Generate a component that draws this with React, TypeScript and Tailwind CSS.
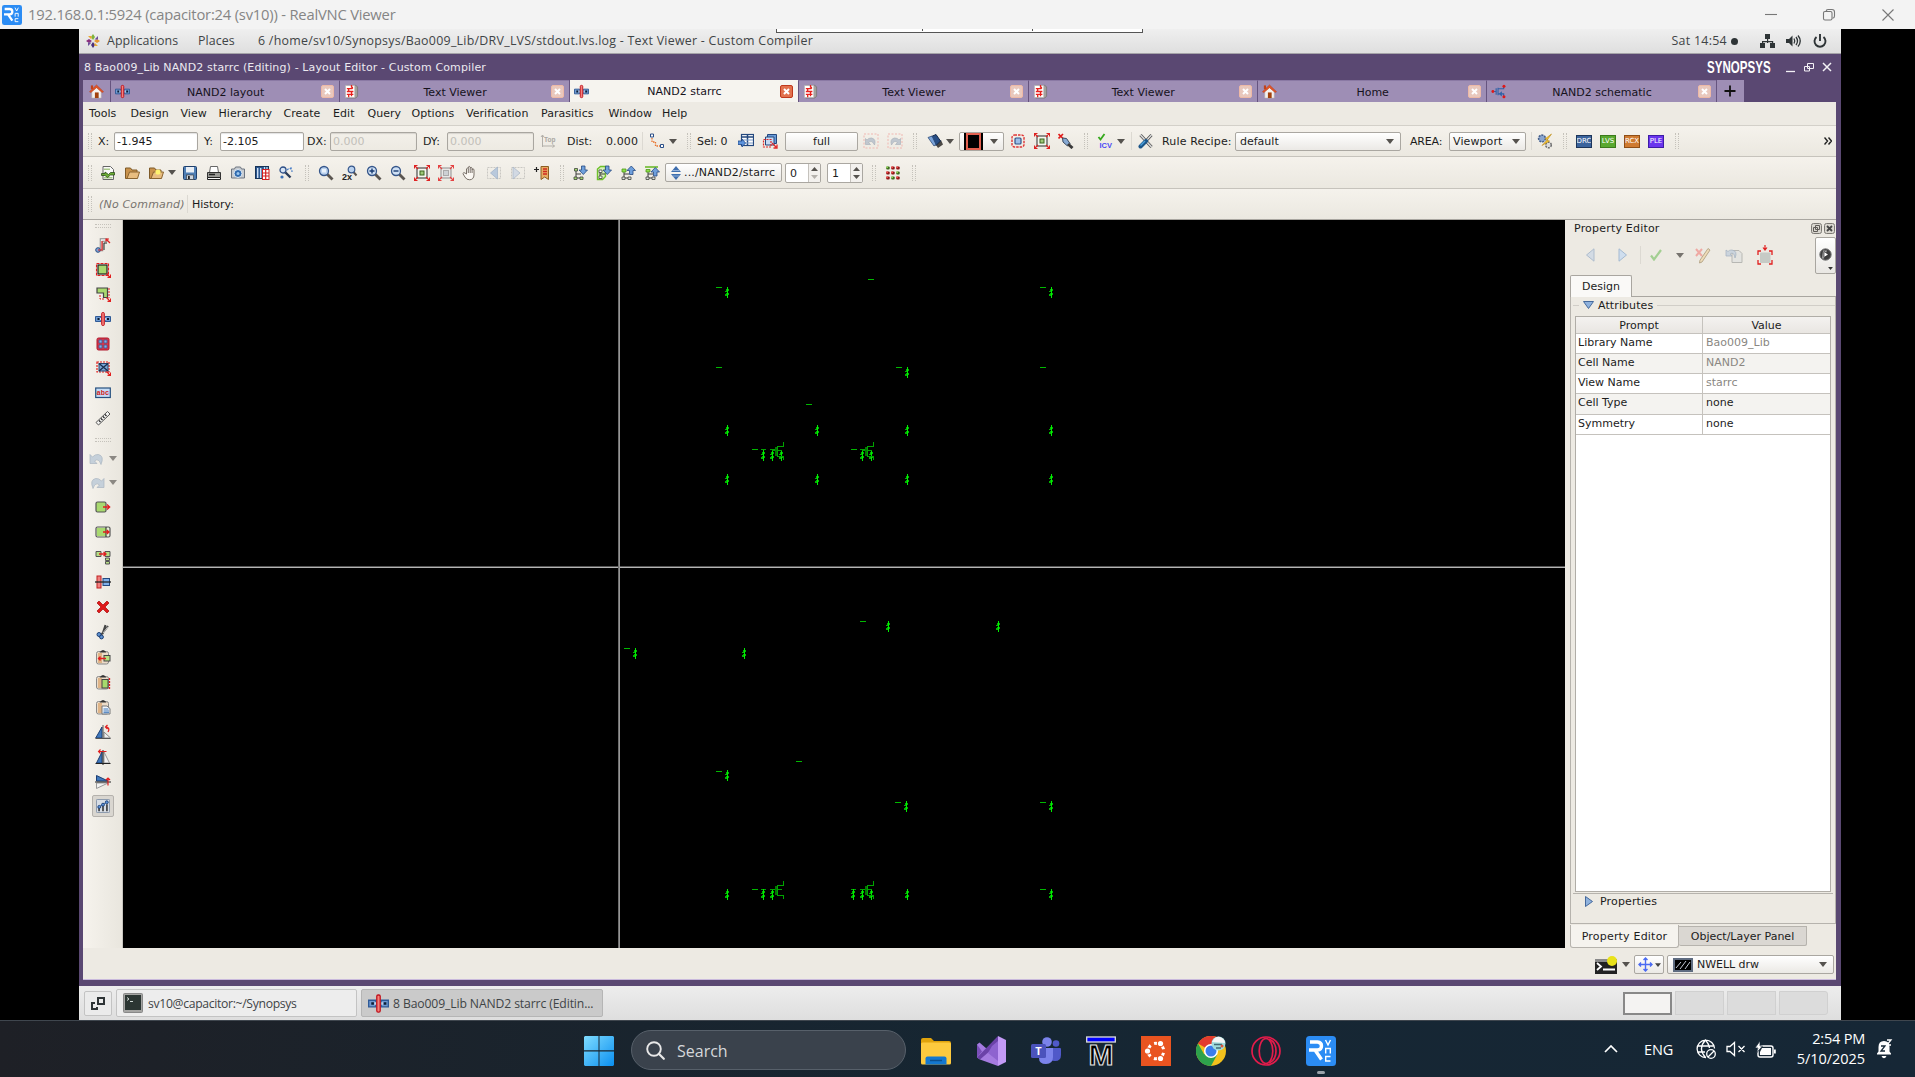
import React from "react";

const P: Record<string, React.ReactNode> = {
  device: (
    <>
      <path d="M0.500 5.500h5.500v5H0.500zM10 5.500h5.500v5H10z" fill="#6f9ad0" stroke="#2f5a97" />
      <path d="M2.500 7h2v2h-2zM12 7h2v2h-2z" fill="#0d1c33" />
      <path d="M5 7h1v2H5zM10.200 7h1v2h-1z" fill="#dbe8f7" />
      <rect x="6.700" y="1.500" width="2.600" height="13" rx="1" fill="#f4827c" stroke="#c1121c" />
    </>
  ),
  home: (
    <>
      <path d="M3 8l5-5 5 5v7H3z" fill="#f4f2f0" stroke="#b9b1ad" strokeWidth=".6" />
      <path d="M0.500 8.200L8 1l7.500 7.200-1.500.9L8 4 2 9.100z" fill="#e0562a" stroke="#b8380f" strokeWidth=".5" />
      <rect x="2" y="1.500" width="2.300" height="4" fill="#c3421b" />
      <rect x="6.300" y="9" width="4" height="6" fill="#a2410d" />
    </>
  ),
  textdoc: (
    <>
      <path d="M3 1.500h9.500l2 1.500v10l-2 2H3z" fill="#a3a09b" stroke="#6f6c68" strokeWidth=".7" />
      <path d="M1.500 1.500h10v13h-10z" fill="#fff" stroke="#aaa" strokeWidth=".7" />
      <path d="M8 1v3M3 5h6M3 8h7M5 5v3M3 11h7M8 8v5M5 11v3M9 3v2" stroke="#e8201c" strokeWidth="1.400" fill="none" />
    </>
  ),
  schematic: (
    <>
      <path d="M2 8h3M5.500 4.500v7M7.500 4v8M7.500 5h6V2.500M7.500 10.500h6V13M9 10.500l2-1.500v3z" stroke="#2f62a8" strokeWidth="1.200" fill="none" />
      <circle cx="2" cy="8" r="1.500" fill="#e01818" />
      <circle cx="13.800" cy="2.300" r="1.600" fill="#e01818" />
      <circle cx="13.800" cy="13.500" r="1.600" fill="#e01818" />
    </>
  ),
  newdoc: (
    <>
      <path d="M3 1.500h7.500L13.500 4.500v10H3z" fill="#fafafa" stroke="#666" />
      <path d="M4 3.500h6v1.500H4zM4 12h8.500v1.500H4z" fill="#a9c98a" />
      <path d="M1.500 8.500h3.500V7l3.500 2.500 2-2h4V10h-4l-3 2.500L5 10.500H1.500z" fill="#6cae35" stroke="#2b4d18" strokeWidth=".8" />
    </>
  ),
  folder: (
    <>
      <path d="M1.500 3h5l1.500 2h5v8.500h-11.500z" fill="#c9924c" stroke="#7e5a28" />
      <path d="M3 13.500L5.500 7h10l-2 6.500z" fill="#e8bd80" stroke="#8a6430" />
    </>
  ),
  folderstar: (
    <>
      <path d="M1.500 3h5l1.500 2h5v8.500h-11.500z" fill="#c9924c" stroke="#7e5a28" />
      <path d="M3 13.500L5.500 7h10l-2 6.500z" fill="#e8bd80" stroke="#8a6430" />
      <circle cx="10" cy="7" r="2.600" fill="#fff36e" />
    </>
  ),
  save: (
    <>
      <rect x="1.500" y="1.500" width="13" height="13" rx="1" fill="#4f7fb5" stroke="#1f3f6b" />
      <rect x="4" y="2" width="8" height="5.500" fill="#e8eef5" />
      <rect x="4.500" y="10" width="7" height="4.500" fill="#cdd5de" stroke="#333" strokeWidth=".6" />
      <rect x="6" y="11" width="1.800" height="3" fill="#222" />
    </>
  ),
  print: (
    <>
      <path d="M4.500 1.500h7l1 6h-9z" fill="#fff" stroke="#666" />
      <path d="M1.500 7.500h13v5h-13z" fill="#9a9a96" stroke="#333" />
      <path d="M1.500 12.500h13v2h-13z" fill="#f7f7f7" stroke="#222" />
      <path d="M3 9.500h6" stroke="#222" strokeWidth="1.500" />
    </>
  ),
  camera: (
    <>
      <path d="M1.500 4h3l1-2h5l1 2h3v9h-13z" fill="#c8ccd0" stroke="#6c7480" />
      <circle cx="8" cy="8.500" r="4" fill="#2f6aae" stroke="#dfe9f4" />
      <circle cx="8" cy="8.500" r="1.500" fill="#9cc6ee" />
    </>
  ),
  library: (
    <>
      <rect x="1.500" y="1.500" width="13" height="12" fill="#2a568f" stroke="#183457" />
      <path d="M3.700 3v10M6.700 3v10" stroke="#cfe0f4" strokeWidth="1.400" />
      <path d="M10.500 2v3M13 2v3" stroke="#cfe0f4" strokeWidth="1.200" />
      <rect x="8.500" y="4.500" width="6.500" height="10" fill="#fff" stroke="#d21f1f" strokeWidth="1" />
      <path d="M11.700 4.500v10M8.500 8h6.500M8.500 11h6.500" stroke="#d21f1f" strokeWidth="1.200" />
    </>
  ),
  findtool: (
    <>
      <circle cx="5" cy="5" r="3" fill="#d7e4f4" stroke="#2e4f86" strokeWidth="1.300" />
      <path d="M7.500 7.500l5 5" stroke="#2b3c58" strokeWidth="2.400" />
      <path d="M9 5c3-3 5-1 5 2M12 3l3 0" stroke="#4b7fc7" fill="none" strokeWidth="1.200" strokeDasharray="2 1" />
      <circle cx="4" cy="12" r="1.600" fill="#3a6fb5" />
    </>
  ),
  zoom: (
    <>
      <path d="M9 9l5.500 5.500" stroke="#5a5550" strokeWidth="2.800" />
      <circle cx="6" cy="6" r="4.500" fill="#b9d1ee" stroke="#35568a" strokeWidth="1.300" />
      <rect x="4" y="4" width="4" height="3.500" fill="#e9f2fc" />
    </>
  ),
  zoom2: (
    <>
      <path d="M11.500 7l3 3.500" stroke="#5a5550" strokeWidth="2" />
      <circle cx="9.500" cy="4.500" r="3.300" fill="#b9d1ee" stroke="#35568a" strokeWidth="1.200" />
      <text x="0" y="15" fontSize="9" fontWeight="bold" fontFamily="Liberation Sans, sans-serif" fill="#222">2x</text>
    </>
  ),
  zoomin: (
    <>
      <path d="M9 9l5.500 5.500" stroke="#5a5550" strokeWidth="2.800" />
      <circle cx="6" cy="6" r="4.500" fill="#cfe0f4" stroke="#35568a" strokeWidth="1.300" />
      <path d="M6 3.500v5M3.500 6h5" stroke="#173a70" strokeWidth="1.400" />
    </>
  ),
  zoomout: (
    <>
      <path d="M9 9l5.500 5.500" stroke="#5a5550" strokeWidth="2.800" />
      <circle cx="6" cy="6" r="4.500" fill="#cfe0f4" stroke="#35568a" strokeWidth="1.300" />
      <path d="M3.500 6h5" stroke="#173a70" strokeWidth="1.400" />
    </>
  ),
  fit: (
    <>
      <rect x="3" y="3" width="10" height="10" fill="#f4f7ef" stroke="#4b4b4b" strokeWidth="1.200" />
      <rect x="6" y="6" width="4" height="4" fill="#9dc878" stroke="#3c6420" />
      <path d="M1 1l3 3M15 1l-3 3M1 15l3-3M15 15l-3-3M.5 3.500V.5h3M12.500.5h3v3M.5 12.500v3h3M12.500 15.500h3v-3" stroke="#e02222" fill="none" strokeWidth="1.100" />
    </>
  ),
  fitsel: (
    <>
      <rect x="3" y="3" width="10" height="10" fill="#e9e8e6" stroke="#8f8f8f" />
      <rect x="5.500" y="5.500" width="5" height="5" fill="#cdd1d4" stroke="#aaa" />
      <path d="M1 1l3 3M15 1l-3 3M1 15l3-3M15 15l-3-3M.5 3.500V.5h3M12.500.5h3v3M.5 12.500v3h3M12.500 15.500h3v-3" stroke="#e54343" fill="none" strokeWidth="1.100" />
    </>
  ),
  hand: (
    <path d="M4.500 9V3.800q.9-1.300 1.800 0V2q1-1.300 1.900 0v1q1-1.200 1.900 0v1.500q1-1.100 1.900 0V10q-.3 4.500-4.200 4.800Q4.500 15 2.900 12L.9 8.500q.9-1.600 2.200-.4zM6.300 4v4M8.200 3v5M10.100 4v4" fill="#fbf8f3" stroke="#6b625a" strokeWidth=".9" />
  ),
  prev: (
    <>
      <rect x="1.500" y="2.500" width="13" height="11" fill="none" stroke="#c9c7c2" strokeDasharray="2 1" />
      <path d="M11.500 2v12L4.500 8z" fill="#b9c9dc" stroke="#9fb0c5" strokeWidth=".7" />
    </>
  ),
  next: (
    <>
      <rect x="1.500" y="2.500" width="13" height="11" fill="none" stroke="#c9c7c2" strokeDasharray="2 1" />
      <path d="M3 2v12l7-6z" fill="#d2d9e3" stroke="#a7b4c6" strokeWidth=".7" />
    </>
  ),
  bookmark: (
    <>
      <path d="M0 4.500h5M2.500 2v5" stroke="#222" strokeWidth="1.200" />
      <path d="M7 1.500h7.500v13L10.700 12 7 14.500z" fill="#e7ac63" stroke="#8c5f24" />
      <path d="M9 4h4M9 6.500h4M9 9h4" stroke="#cf2a20" strokeWidth="1.400" />
    </>
  ),
  treedown: (
    <>
      <path d="M4 5v8M4 9h5M4 13h5" stroke="#3e3e3e" fill="none" />
      <path d="M2.500 3.500h3v2.500H2.500zM2 12h3v2.500H2zM8 12h3v2.500H8z" fill="#a5d86f" stroke="#3f453c" strokeWidth=".8" />
      <path d="M9.500 1h3.500v4h2.500L11.300 9.500 7 5h2.500z" fill="#6fa0dc" stroke="#274a80" strokeWidth=".8" />
    </>
  ),
  treedown2: (
    <>
      <path d="M1.500 4l3-2.500h5v10l-3 3H1.500z" fill="#d8f2bb" stroke="#6fc02b" strokeWidth="1.400" />
      <path d="M4 5v8M4 9h5" stroke="#3e3e3e" fill="none" />
      <path d="M3 5h3v2.500H3zM3 11h3v2.500H3z" fill="#fff" stroke="#3f453c" strokeWidth=".8" />
      <path d="M9.500 1h3.500v4h2.500L11.300 9.500 7 5h2.500z" fill="#6fa0dc" stroke="#274a80" strokeWidth=".8" />
    </>
  ),
  treeup: (
    <>
      <path d="M4 5v8M4 9h5M4 13h5" stroke="#3e3e3e" fill="none" />
      <path d="M2 4h4v3H2z" fill="#8fe04a" stroke="#4b9a16" strokeWidth=".8" />
      <path d="M2 12h3v2.500H2zM8 12h3v2.500H8z" fill="#ddd" stroke="#3f453c" strokeWidth=".8" />
      <path d="M9.500 9.500h3.500v-4h2.500L11.300 1 7 5.500h2.500z" fill="#6fa0dc" stroke="#274a80" strokeWidth=".8" />
    </>
  ),
  treetop: (
    <>
      <path d="M1 2h13" stroke="#6dbb2c" strokeWidth="1.600" />
      <path d="M4 5v8M4 9h5M4 13h5" stroke="#3e3e3e" fill="none" />
      <path d="M2 4.500h4v2.500H2z" fill="#8fe04a" stroke="#4b9a16" strokeWidth=".8" />
      <path d="M2 12h3v2.500H2zM8 12h3v2.500H8z" fill="#ddd" stroke="#3f453c" strokeWidth=".8" />
      <path d="M9.500 11h3.500V7h2.500L11.300 2.500 7 7h2.500z" fill="#6fa0dc" stroke="#274a80" strokeWidth=".8" />
    </>
  ),
  dots: (
    <>
      {[3, 8, 13].map((x) =>
        [3, 8, 13].map((y) => (
          <g key={x + "-" + y}>
            <rect x={x - 1.8} y={y - 1.5} width="3.500" height="3.100" rx="1" fill={(x + y) % 3 === 0 ? "#3d6b1e" : "#8f1717"} />
            <rect x={x - 1.8} y={y - 1.5} width="1.800" height="1.600" fill={(x + y) % 3 === 0 ? "#8fd058" : "#ec4a4a"} />
          </g>
        )),
      )}
    </>
  ),
  top: (
    <>
      <path d="M2.500 14V2M1 4l1.500-2L4 4M2.500 13h12M12.500 11.500l2 1.500-2 1.500" stroke="#b3b0aa" fill="none" />
      <text x="4" y="9" fontSize="6.500" fontWeight="bold" fontFamily="Liberation Sans, sans-serif" fill="#aaa7a1">Top</text>
    </>
  ),
  route: (
    <>
      <path d="M3 5v4h3.500v4H11" stroke="#e8742f" fill="none" strokeDasharray="1.500 1" strokeWidth="1.300" />
      <path d="M1.500 1h3v3h-3zM11.500 11.500h3v3h-3z" fill="#fff" stroke="#2b4f88" />
    </>
  ),
  tablesel: (
    <>
      <rect x="3.500" y="1.500" width="12" height="11" fill="#fff" stroke="#24487e" strokeWidth="1.200" />
      <path d="M4 4h11M9.500 2v10" stroke="#24487e" strokeWidth="1.500" />
      <path d="M4 7h11M4 10h11" stroke="#7b9cc8" />
      <path d="M0 8h4V6l3.500 4L4 14v-2.500H0z" fill="#5c93dc" stroke="#1f4a8c" strokeWidth=".8" />
    </>
  ),
  boxsel: (
    <>
      <path d="M5.500 1.500h9v9h-9z" fill="#6a9bd8" stroke="#24487e" />
      <path d="M3.500 4h8.500v8H3.500z" fill="#c7dbf3" stroke="#24487e" />
      <path d="M1.500 6.500h7.500v7.500H1.500z" fill="none" stroke="#e02828" strokeDasharray="2 1" strokeWidth="1.200" />
      <path d="M10 10l5 5M15 11.500v3.500h-3.500" stroke="#e02828" strokeWidth="1.300" fill="none" />
    </>
  ),
  undosel: (
    <>
      <rect x="1" y="1" width="14" height="14" fill="none" stroke="#f0b7b1" strokeDasharray="2 1.500" />
      <path d="M2.500 5.500v6h5L5.500 9.500q3.500-3 6 2.500 2-6-3-7-3-.2-4.500 2z" fill="#c0c7cf" stroke="#a5adb7" strokeWidth=".6" />
    </>
  ),
  redosel: (
    <>
      <rect x="1" y="1" width="14" height="14" fill="none" stroke="#f0b7b1" strokeDasharray="2 1.500" />
      <path d="M13.500 5.500v6h-5l2-2q-3.500-3-6 2.500-2-6 3-7 3-.2 4.500 2z" fill="#c0c7cf" stroke="#a5adb7" strokeWidth=".6" />
    </>
  ),
  bucket: (
    <>
      <path d="M8 10.500l6-3.500 2 4.500-5 3.500z" fill="#4b4845" />
      <path d="M4.500 3.500L9 1.500l4.500 6.500-4.500 4.500z" fill="#274e86" stroke="#15294a" />
      <path d="M1 4.500l4-1.500 4 8.500-2 1.500z" fill="#7aa3d9" stroke="#22406e" strokeWidth=".7" />
    </>
  ),
  selround: (
    <>
      <rect x="2" y="2" width="12" height="12" rx="2.500" fill="none" stroke="#df3535" strokeWidth="1.400" strokeDasharray="2.500 1" />
      <rect x="5" y="5" width="6" height="6" rx="1" fill="#9cbfe8" stroke="#2e5288" strokeWidth="1.200" />
    </>
  ),
  probe: (
    <>
      <path d="M0.500 1l4.500 4.500M5 1L.5 5.500" stroke="#e01d1d" strokeWidth="1.700" />
      <path d="M4.500 5l4 .5 3.500 5-2.500 2.500-4.500-4z" fill="#86a9d3" stroke="#3c4b60" />
      <path d="M10 11l4.500 4" stroke="#3a3a3a" strokeWidth="3" />
    </>
  ),
  icv: (
    <>
      <path d="M1.500 4l2 2.500L7.500 1" stroke="#35a81c" strokeWidth="1.800" fill="none" />
      <text x="2.500" y="14.500" fontSize="7.500" fontWeight="bold" fontFamily="Liberation Sans, sans-serif" fill="#4a4af5">ICV</text>
    </>
  ),
  tools: (
    <>
      <path d="M2.500 2l11 12" stroke="#4b4b4b" strokeWidth="3" />
      <path d="M2.500 2l11 12" stroke="#d8d8d8" strokeWidth="1.700" />
      <path d="M8 8l5.500-6" stroke="#4b4b4b" strokeWidth="2.800" />
      <path d="M8 8l5.500-6" stroke="#e6e6e6" strokeWidth="1.200" />
      <path d="M2.500 13.500L8 8" stroke="#1c5689" strokeWidth="4" strokeLinecap="round" />
      <path d="M2.500 12.500L7 8" stroke="#4aa0dd" strokeWidth="1.500" />
    </>
  ),
  gears: (
    <>
      <circle cx="5" cy="5.500" r="3.400" fill="#8ba6cf" stroke="#48608a" strokeWidth="1.600" strokeDasharray="2 1" />
      <circle cx="11.500" cy="12" r="2.800" fill="#ddd" stroke="#6b6b6b" strokeWidth="1.500" strokeDasharray="2 1" />
      <path d="M14.500 1L8 6l2.500.5L5 12.500l7.500-4.500-2.500-.7z" fill="#f5c52f" stroke="#b98613" strokeWidth=".6" />
    </>
  ),
  wire: (
    <>
      <path d="M4 12.500h2.500V3h6" fill="none" stroke="#8c8c8c" strokeWidth="3.500" />
      <path d="M4 12.500h2.500V3h6" fill="none" stroke="#f2f2f2" strokeWidth="1.500" />
      <path d="M9 13V6h3" fill="none" stroke="#222" />
      <circle cx="3" cy="13" r="2.300" fill="#7fa6d8" stroke="#2c4c80" />
      <path d="M7 4v9H3M11 2l4 4M11 4.500V2h3" stroke="#e11f1f" fill="none" strokeWidth="1.200" />
    </>
  ),
  rect: (
    <>
      <rect x="3" y="3" width="9" height="9" fill="#a9d96f" stroke="#222" strokeWidth="1.200" />
      <rect x="1.500" y="1.500" width="12" height="12" fill="none" stroke="#e11f1f" strokeWidth="1.100" strokeDasharray="3 1" />
      <path d="M11.500 11.500l4 4M15.500 12.500v3h-3" stroke="#e11f1f" strokeWidth="1.300" fill="none" />
    </>
  ),
  poly: (
    <>
      <path d="M2 2h10.500v9.500H8.500V7H2z" fill="#a9d96f" stroke="#444" strokeWidth="1.200" />
      <path d="M14 2v10M5 9v4h5" stroke="#e11f1f" strokeDasharray="2 1" fill="none" />
      <path d="M11.500 11.500l4 4M15.500 12.500v3h-3" stroke="#e11f1f" strokeWidth="1.300" fill="none" />
    </>
  ),
  via: (
    <>
      <rect x="2" y="2" width="12" height="12" rx="1.500" fill="#d3354b" stroke="#b01a2e" />
      <path d="M4 4h3v3H4zM9 4h3v3H9zM4 9h3v3H4zM9 9h3v3H9z" fill="#88aee8" stroke="#3a5a94" strokeWidth=".8" />
    </>
  ),
  inst: (
    <>
      <rect x="2" y="2" width="12" height="10" fill="none" stroke="#e11f1f" strokeWidth="1.200" strokeDasharray="2 1" />
      <rect x="4" y="3.500" width="9" height="7.500" fill="#7aa5d8" stroke="#25426e" />
      <path d="M4 3.500l9 7.500M13 3.500L4 11" stroke="#1b2f4d" strokeWidth="1.300" />
      <path d="M11.500 11.500l4 4M15.500 12.500v3h-3" stroke="#e11f1f" strokeWidth="1.300" fill="none" />
    </>
  ),
  label: (
    <>
      <rect x=".7" y="3" width="14.600" height="9.500" fill="#c5dcf5" stroke="#26507f" strokeWidth="1.200" />
      <text x="1.600" y="10.300" fontSize="7" fontWeight="bold" textLength="12.500" fontFamily="Liberation Mono, monospace" fill="#d01c1c">abc</text>
    </>
  ),
  ruler: (
    <>
      <path d="M1 12.500L12.500 1.500l2.500 2.500L3.500 15z" fill="#f4f4f2" stroke="#555" />
      <path d="M4 10.500l1.500 1.500M6 8.500l1.500 1.500M8 6.500l1.500 1.500M10 4.500l1.500 1.500" stroke="#222" strokeWidth="1.100" />
    </>
  ),
  undo: <path d="M1 3.500v9h7L5.500 10q4-3.500 6.500 3.500Q15.500 5 9.500 3.500 6 3 3.500 6z" fill="#c5d0da" stroke="#a9b5c0" strokeWidth=".7" />,
  redo: <path d="M15 3.500v9H8l2.500-2.500Q6.500 6.500 4 13.500.5 5 6.500 3.500 10 3 12.500 6z" fill="#c5d0da" stroke="#a9b5c0" strokeWidth=".7" />,
  move: (
    <>
      <rect x="1" y="3" width="10" height="10" rx="1.500" fill="#a9d96f" stroke="#555" strokeWidth="1.200" />
      <path d="M8 8h7M12 5.500l2.700 2.500-2.700 2.500" stroke="#e11f1f" strokeWidth="1.300" fill="none" />
    </>
  ),
  stretch: (
    <>
      <rect x="1" y="3" width="14" height="10" rx="1.500" fill="#e6f2d8" stroke="#555" strokeWidth="1.200" />
      <path d="M2 4h9v8H2z" fill="#a9d96f" />
      <path d="M11 3v10" stroke="#222" />
      <path d="M8 8h6M11.800 6l2.200 2-2.200 2" stroke="#e11f1f" strokeWidth="1.300" fill="none" />
    </>
  ),
  copy: (
    <>
      <path d="M1 2.500h5v5H1zM10 2.500h5v5h-5zM10.500 9h4v2.500h-4zM10.500 12.500h4V15h-4z" fill="#b5dd84" stroke="#555" />
      <path d="M4 5h7M8.500 3l2.500 2-2.500 2" stroke="#e11f1f" strokeWidth="1.300" fill="none" />
    </>
  ),
  align: (
    <>
      <rect x="2" y="2" width="4" height="12" fill="#f08080" stroke="#c02020" />
      <rect x="8" y="4.500" width="6.500" height="7" fill="#7fb0ea" stroke="#24487e" />
      <path d="M0 8h16" stroke="#222" strokeWidth="1.300" />
    </>
  ),
  del: <path d="M2 4l2-2 4 4 4-4 2 2-4 4 4 4-2 2-4-4-4 4-2-2 4-4z" fill="#e01a1a" stroke="#a80a0a" strokeWidth=".7" />,
  scissors: (
    <>
      <path d="M13 2L6 11M10.500 1L7.500 10" stroke="#444" strokeWidth="2" />
      <path d="M12.800 2.800L8 9" stroke="#ddd" strokeWidth=".8" />
      <circle cx="4" cy="10.500" r="2" fill="#5e92d2" stroke="#1d3e72" />
      <circle cx="6.500" cy="13" r="1.900" fill="#5e92d2" stroke="#1d3e72" />
    </>
  ),
  clipA: (
    <>
      <rect x="1.500" y="2.500" width="12" height="12.500" rx="2" fill="#ecdcc9" stroke="#888" />
      <path d="M3 4h4v10H3z" fill="#dfb487" />
      <path d="M4.500 3.500q3.500-5 7 0z" fill="#333" />
      <rect x="9" y="6.500" width="6" height="5.500" fill="#b5e080" stroke="#444" />
      <path d="M3 9.500h8M5.500 7.500L3.500 9.500l2 2" stroke="#e11f1f" strokeWidth="1.300" fill="none" />
    </>
  ),
  clipB: (
    <>
      <rect x="1.500" y="2.500" width="12" height="12.500" rx="2" fill="#ecdcc9" stroke="#888" />
      <path d="M3 4h4v10H3z" fill="#dfb487" />
      <path d="M4.500 3.500q3.500-5 7 0z" fill="#333" />
      <rect x="7" y="5.500" width="6" height="8.500" fill="#a6da6c" stroke="#444" />
      <path d="M14.500 4v11" stroke="#e11f1f" strokeWidth="1.300" strokeDasharray="2 1" />
    </>
  ),
  clipC: (
    <>
      <rect x="1.500" y="2.500" width="12" height="12.500" rx="2" fill="#ecdcc9" stroke="#888" />
      <path d="M3 4h4v10H3z" fill="#dfb487" />
      <path d="M4.500 3.500q3.500-5 7 0z" fill="#333" />
      <path d="M7 7h5l3 2.500V15H7z" fill="#f2f6fb" stroke="#777" />
      <path d="M8.500 10h5M8.500 12h5.500M8.500 13.700h5.500" stroke="#3d74b5" />
    </>
  ),
  rot: (
    <>
      <path d="M7 3v11H.7z" fill="#3f78bd" stroke="#1d3e72" />
      <path d="M9 14h6.500L9 8z" fill="#eee" stroke="#888" />
      <path d="M.5 14.500h15M8 1v14" stroke="#555" />
      <path d="M13 8q2.500-4-2-5M12.500 1L10.500 3l2 2" stroke="#e11f1f" strokeWidth="1.300" fill="none" />
    </>
  ),
  mirx: (
    <>
      <path d="M7 3v11H1.500z" fill="#3f78bd" stroke="#1d3e72" />
      <path d="M9 3v11h5.500z" fill="#f2f2f2" stroke="#999" />
      <path d="M8 1v15M.5 14.500h15" stroke="#222" />
      <path d="M3.500 2.500h8M5.500.5l-2 2 2 2" stroke="#e11f1f" strokeWidth="1.100" fill="none" />
    </>
  ),
  miry: (
    <>
      <path d="M1.500 1.500V7H13z" fill="#3f78bd" stroke="#1d3e72" />
      <path d="M1.500 14.500V9H13z" fill="#f2f2f2" stroke="#999" />
      <path d="M0 8h16" stroke="#222" />
      <path d="M13 11.500V4M11 6l2-2 2 2" stroke="#e11f1f" strokeWidth="1.200" fill="none" />
    </>
  ),
  sliders: (
    <>
      <rect x=".5" y=".5" width="15" height="15" rx="1" fill="#d7dde5" stroke="#7d8da3" />
      <path d="M3.500 10v4M8 8v6M12.500 6v8" stroke="#222" strokeWidth="1.600" />
      <path d="M2 10L13.500 3" stroke="#2d63a6" />
      <circle cx="3.800" cy="9" r="1.700" fill="#5c93dc" stroke="#1d3e72" />
      <circle cx="8" cy="6.500" r="1.700" fill="#5c93dc" stroke="#1d3e72" />
      <circle cx="12.300" cy="3.800" r="1.700" fill="#5c93dc" stroke="#1d3e72" />
    </>
  ),
};

function Ico({ n, c = "size-4" }: { n: string; c?: string }) {
  return (
    <svg viewBox="0 0 16 16" className={"shrink-0 " + c}>
      {P[n]}
    </svg>
  );
}

function Arrow({ c = "", fill = "#55524e" }: { c?: string; fill?: string }) {
  return (
    <svg viewBox="0 0 8 5" className={"h-[5px] w-2 shrink-0 " + c}>
      <path d="M0 0h8L4 5z" fill={fill} />
    </svg>
  );
}

function Grip({ c = "" }: { c?: string }) {
  return (
    <div className={"flex h-4 w-1 shrink-0 justify-between " + c}>
      <div className="w-0 border-l border-dotted border-[#c5c2bb]" />
      <div className="w-0 border-l border-dotted border-[#c5c2bb]" />
    </div>
  );
}

function GripH({ c = "" }: { c?: string }) {
  return (
    <div className={"flex h-1 w-4 shrink-0 flex-col justify-between " + c}>
      <div className="h-0 border-t border-dotted border-[#c5c2bb]" />
      <div className="h-0 border-t border-dotted border-[#c5c2bb]" />
    </div>
  );
}

const Sep = ({ c = "" }: { c?: string }) => <div className={"h-[18px] w-px shrink-0 bg-[#dcd9d2] " + c} />;

const Field = ({ children, c }: { children: React.ReactNode; c: string }) => (
  <div className={"flex h-[19px] shrink-0 items-center rounded-[2px] border border-[#a9a6a0] px-[2px] pt-px shadow-[inset_0_1px_1px_rgba(0,0,0,0.12)] " + c}>{children}</div>
);

const BTN = "flex h-[19px] shrink-0 items-center rounded-[2px] border border-[#aaa7a1] bg-gradient-to-b from-white to-[#ebe9e5] ";

function Close({ active }: { active?: boolean }) {
  return (
    <svg viewBox="0 0 13 13" className="mr-[5px] size-[13px] shrink-0">
      <rect x=".5" y=".5" width="12" height="12" rx="1.500" fill={active ? "#e2714d" : "#e9c8bd"} stroke={active ? "#c0391c" : "#eeb9a6"} />
      <path d="M4 4l5 5M9 4L4 9" stroke="#fff" strokeWidth="2" />
    </svg>
  );
}

const TABS: [string, string, boolean][] = [
  ["device", "NAND2 layout", false],
  ["textdoc", "Text Viewer", false],
  ["device", "NAND2 starrc", true],
  ["textdoc", "Text Viewer", false],
  ["textdoc", "Text Viewer", false],
  ["home", "Home", false],
  ["schematic", "NAND2 schematic", false],
];

const DASHES = [
  [716, 287], [868, 279], [1040, 287], [716, 367], [896, 367], [1040, 367], [806, 404], [752, 449], [851, 449],
  [860, 621], [624, 648], [716, 771], [796, 761], [895, 802], [1040, 802], [752, 889], [1040, 889],
];
const RES = [
  [727, 287], [1051, 287], [907, 367], [727, 425], [817, 425], [907, 425], [1051, 425],
  [727, 474], [817, 474], [907, 474], [1051, 474],
  [763, 450], [772, 450], [781, 450], [862, 450], [871, 450],
  [888, 621], [998, 621], [635, 648], [744, 648], [727, 770], [906, 801], [1051, 801],
  [727, 889], [763, 889], [772, 889], [853, 889], [862, 889], [871, 889], [907, 889], [1051, 889],
];
const TEES = [[763, 449], [772, 449], [862, 449], [763, 889], [772, 889], [853, 889], [862, 889]];
const MOS = [[775, 442], [865, 442], [775, 881], [865, 881]];

function Canvas() {
  return (
    <svg viewBox="123 220 1442 728" className="h-[728px] w-[1442px] shrink-0 bg-black" shapeRendering="crispEdges">
      <path d="M123 566.500H1565" stroke="#555" />
      <path d="M123 567.500H1565" stroke="#b4b4b4" />
      <path d="M618.500 220V948" stroke="#6e6e6e" />
      <path d="M619.500 220V948" stroke="#969696" />
      {DASHES.map(([x, y], i) => (
        <rect key={i} x={x} y={y} width="6" height="1" fill="#00b800" />
      ))}
      {TEES.map(([x, y], i) => (
        <rect key={i} x={x - 2} y={y} width="5" height="1" fill="#00a000" />
      ))}
      {RES.map(([x, y], i) => (
        <g key={i}>
          <path d={`M${x - 1} ${y + 2.5}h3M${x - 1} ${y + 3.5}h3M${x - 2} ${y + 4.5}h3M${x - 1} ${y + 6.5}h3M${x - 2} ${y + 7.5}h4M${x - 2} ${y + 8.5}h3`} stroke="#00b400" />
          <rect x={x} y={y} width="1" height="11" fill="#00ee00" />
        </g>
      ))}
      {MOS.map(([x, y], i) => (
        <g key={i} fill="none" stroke="#00a400">
          <path d={`M${x + 8.5} ${y}v4.500h-6v10h6v3M${x - 3} ${y + 8.5}h10`} />
          <path d={`M${x + 1} ${y + 5}v9`} stroke="#007800" strokeWidth="2" />
        </g>
      ))}
    </svg>
  );
}

const CHIP = "flex h-[13px] w-4 shrink-0 items-center justify-center overflow-hidden border font-['DejaVu_Sans',sans-serif] text-[7px] leading-none text-white ";

const ROWS: [string, string, boolean][] = [
  ["Library Name", "Bao009_Lib", true],
  ["Cell Name", "NAND2", true],
  ["View Name", "starrc", true],
  ["Cell Type", "none", false],
  ["Symmetry", "none", false],
];

function VncLogo({ c }: { c: string }) {
  return (
    <svg viewBox="0 0 30 30" className={"shrink-0 " + c}>
      <rect width="30" height="30" rx="3.500" fill="#2b8cf4" />
      <path d="M4 6h7.500q4 .3 4 4t-4 4H8M3 14h6l6.500 9.500" fill="none" stroke="#fff" strokeWidth="3.400" />
      <path d="M19.500 4l2.500 5 2.500-5M19.700 17.500v-5h4.600v5M24.500 20.500h-4.800v4.500h4.800" fill="none" stroke="#fff" strokeWidth="1.400" />
    </svg>
  );
}

function PropertyPanel() {
  return (
    <div className="flex w-[271px] shrink-0 flex-col bg-[#edeae3]">
      <div className="flex h-[17px] items-center pr-px pl-[9px]">
        <span className="tracking-[0.2px]">Property Editor</span>
        <svg viewBox="0 0 24 11" className="ml-auto h-[11px] w-6">
          <rect x=".5" y=".5" width="10" height="10" rx="2" fill="#d9d6cf" stroke="#7d7a75" />
          <path d="M4.500 2.500h4v4h-4zM2.500 4.500h4v4h-4z" fill="none" stroke="#5e5b57" />
          <rect x="13.500" y=".5" width="10" height="10" rx="2" fill="#d9d6cf" stroke="#7d7a75" />
          <path d="M16 3l5 5M21 3l-5 5" stroke="#444" strokeWidth="1.800" />
        </svg>
      </div>
      <div className="flex h-[38px] items-center pb-[2px] pl-[20px]">
        <svg viewBox="0 0 10 14" className="h-[14px] w-[10px]"><path d="M9 .8v12.400L1.500 7z" fill="#d3dbe4" stroke="#aebccd" /></svg>
        <svg viewBox="0 0 10 14" className="ml-[23px] h-[14px] w-[10px]"><path d="M1 .8v12.400L8.500 7z" fill="#cfdeee" stroke="#a5bad1" /></svg>
        <Sep c="ml-[12px]" />
        <svg viewBox="0 0 12 12" className="ml-[9px] size-3"><path d="M1 6.500l3 4L11 1" fill="none" stroke="#a3cf92" strokeWidth="2.200" /></svg>
        <Arrow c="ml-[14px]" fill="#77746f" />
        <svg viewBox="0 0 16 17" className="ml-[11px] h-[17px] w-4">
          <path d="M1 2l6 7M7 2L1 9" stroke="#efa9a3" strokeWidth="2" />
          <path d="M13 1.500l2 1.500-8 12-2.500 1 .5-2.800z" fill="#efdcb8" stroke="#b8a88b" />
        </svg>
        <svg viewBox="0 0 18 15" className="ml-[14px] h-[15px] w-[18px]">
          <path d="M7 2.500h7l3 3v9H7z" fill="#e3e3e0" stroke="#b7b7b3" />
          <path d="M1 2v6h6L5 6q4-3 5 4 3-7-3-8-2.500-.3-4 1.500z" fill="#cbd4dd" stroke="#a3b0be" strokeWidth=".7" />
        </svg>
        <svg viewBox="0 0 16 20" className="ml-[14px] -mt-px h-5 w-4">
          <path d="M8 0v5M6 2.500L8 5l2-2.500" stroke="#e11f1f" fill="none" strokeWidth="1.200" />
          <path d="M1 10V6h3M12 6h3v4M15 15v4h-3M4 19H1v-4" stroke="#e11f1f" fill="none" strokeWidth="1.300" />
          <rect x="3" y="7.500" width="10.500" height="10.500" rx="1" fill="#c6cac5" />
        </svg>
        <div className="ml-auto flex h-[37px] w-[21px] flex-col items-center justify-end gap-[6px] rounded-[2px] border border-[#a9a6a0] bg-gradient-to-b from-white to-[#e9e7e3] pb-[3px]">
          <svg viewBox="0 0 13 13" className="size-[13px]">
            <circle cx="6.500" cy="6.500" r="5.700" fill="#3d3d3d" stroke="#777" />
            <path d="M4 2.500h4l-3 8H3z" fill="#aaa" />
            <path d="M5 3.500v6l4.500-3z" fill="#fff" stroke="#111" strokeWidth=".6" />
          </svg>
          <svg viewBox="0 0 8 5" className="mr-[2px] h-[3px] w-[5px] self-end"><path d="M0 0h8L4 5z" fill="#333" /></svg>
        </div>
      </div>
      <div className="flex h-[22px] shrink-0 pl-[5px]">
        <div className="flex w-[62px] items-center justify-center rounded-t-[2px] border border-b-0 border-[#a9a6a0] bg-[#faf9f7]">Design</div>
        <div className="flex-1 border-b border-[#a9a6a0]" />
      </div>
      <div className="ml-[5px] flex h-[627px] flex-col border-x border-b border-[#b6b3ad] pl-[2px]">
        <div className="flex h-[19px] shrink-0 items-center gap-1 pb-[3px]">
          <div className="h-px w-[6px] bg-[#d1cec8]" />
          <svg viewBox="0 0 11 8" className="h-2 w-[11px]"><path d="M.5.5h10L5.500 7.500z" fill="#8fb2dd" stroke="#45699c" /></svg>
          <span className="tracking-[0.1px]">Attributes</span>
          <div className="h-px flex-1 bg-[#d1cec8]" />
        </div>
        <div className="mr-[4px] ml-[2px] flex h-[576px] shrink-0 flex-col border border-[#b0ada7] bg-white">
          <div className="grid h-[17px] grid-cols-[127px_1fr] border-b border-[#c5c2bd] bg-gradient-to-b from-[#f4f2f0] to-[#e9e6e2] text-center leading-[17px]">
            <div className="border-r border-[#c5c2bd]">Prompt</div>
            <div>Value</div>
          </div>
          {ROWS.map(([k, v, dim], i) => (
            <div key={k} className={"grid h-[20.15px] grid-cols-[127px_1fr] border-b border-[#c5c2bd] leading-[18px] " + (i % 2 ? "bg-[#f4f3f0]" : "bg-white")}>
              <div className="border-r border-[#c5c2bd] pl-[2px]">{k}</div>
              <div className={dim ? "pl-[3px] text-[#8a8782]" : "pl-[3px]"}>{v}</div>
            </div>
          ))}
        </div>
        <div className="mt-px mr-[2px] border-t border-[#b6b3ad]" />
        <div className="flex h-[14px] items-center gap-[7px] pl-[12px]">
          <svg viewBox="0 0 8 11" className="h-[11px] w-2"><path d="M.5.5v10L7.500 5.500z" fill="#8fb2dd" stroke="#45699c" /></svg>
          <span className="tracking-[0.15px]">Properties</span>
        </div>
      </div>
      <div className="flex h-6 pt-px pl-[5px]">
        <div className="flex w-[109px] items-center justify-center rounded-b-[3px] border border-t-0 border-[#b6b3ad] bg-[#f5f3ee] tracking-[0.2px]">Property Editor</div>
        <div className="mt-px flex h-[20px] w-[128px] items-center justify-center rounded-b-[2px] border border-l-0 border-[#b6b3ad] bg-[#dad7d2]">Object/Layer Panel</div>
      </div>
    </div>
  );
}

const SIDE1 = ["wire", "rect", "poly", "device", "via", "inst", "label", "ruler"];
const SIDE2 = ["move", "stretch", "copy", "align", "del", "scissors", "clipA", "clipB", "clipC", "rot", "mirx", "miry"];

const MENU: [string, string][] = [
  ["Tools", "w-[41.5px]"], ["Design", "w-[50px]"], ["View", "w-[38px]"], ["Hierarchy", "w-[65px]"], ["Create", "w-[49.5px]"],
  ["Edit", "w-[34.5px]"], ["Query", "w-11"], ["Options", "w-[54.5px]"], ["Verification", "w-[75px]"], ["Parasitics", "w-[67.5px]"],
  ["Window", "w-[53.5px]"], ["Help", "w-8"],
];

function Spin({ v, off, c }: { v: string; off?: boolean; c: string }) {
  return (
    <div className={"flex h-[20px] w-9 shrink-0 overflow-hidden rounded-[2px] border border-[#aaa7a1] bg-white " + c}>
      <span className="flex-1 pl-1 leading-[19px]">{v}</span>
      <div className="flex w-3 flex-col items-center justify-center gap-[4px] border-l border-[#c5c2bd] bg-[#f3f1ee]">
        <svg viewBox="0 0 7 4" className="h-1 w-[7px]"><path d="M0 4h7L3.500 0z" fill="#55524e" /></svg>
        <svg viewBox="0 0 7 4" className="h-1 w-[7px]"><path d="M0 0h7L3.500 4z" fill={off ? "#b5b2ad" : "#55524e"} /></svg>
      </div>
    </div>
  );
}

export default function App() {
  return (
    <div className="flex h-[1077px] w-[1915px] flex-col overflow-hidden bg-black font-['DejaVu_Sans',sans-serif] text-[11px] leading-none whitespace-nowrap text-[#1c1c1c]">
      <header className="relative flex h-[29px] shrink-0 items-center bg-[#f3f3f3] pl-[2px]">
        <VncLogo c="size-5" />
        <span className="ml-[6px] font-['Open_Sans',sans-serif] text-[14.75px] tracking-[-0.2px] text-[#858585]">192.168.0.1:5924 (capacitor:24 (sv10)) - RealVNC Viewer</span>
        <svg viewBox="0 0 130 14" className="mr-5 ml-auto h-[14px] w-[130px]" fill="none" stroke="#777" strokeWidth="1.100">
          <path d="M0 6.500h12" />
          <rect x="58.500" y="3.500" width="8.500" height="8.500" rx="1.500" />
          <path d="M61 3.500q.2-2 2-2h4q2.500 0 2.500 2.500v4q0 2-2 2.200" />
          <path d="M117.500 1.500l11 11M128.500 1.500l-11 11" />
        </svg>
        <div className="absolute top-[29px] left-[776px] flex h-1 w-[367px] border border-t-0 border-[#555] bg-white">
          <div className="h-[2px] w-[146px] border-r border-[#555]" />
          <div className="h-[2px] w-[110px] border-r border-[#555]" />
        </div>
      </header>

      <div className="ml-[79px] flex h-[991px] w-[1762px] shrink-0 flex-col">
        <div className="flex h-[25px] shrink-0 items-center border-b border-[#a5a3a8] bg-gradient-to-b from-[#efefef] to-[#dfdfdf] pl-[7px] font-['Open_Sans',sans-serif] text-[12.4px] text-[#3f4446]">
          <svg viewBox="0 0 14 14" className="size-[14px]">
            <path d="M7 0l2 3-2 3-2-3z" fill="#7db33a" /><path d="M7 14l2-3-2-3-2 3z" fill="#4a2f7c" />
            <path d="M0 7l3-2 3 2-3 2z" fill="#8a2e7d" /><path d="M14 7l-3-2-3 2 3 2z" fill="#e8962d" />
            <path d="M2 2h3.500v3.500zM12 12H8.500V8.500z" fill="#e9a830" /><path d="M12 2v3.500H8.500zM2 12V8.500h3.500z" fill="#6d4f9b" />
          </svg>
          <span className="ml-[7px] w-[91px] tracking-[0.05px]">Applications</span>
          <span className="w-[60px] tracking-[0.1px]">Places</span>
          <span className="tracking-[0.265px]">6 /home/sv10/Synopsys/Bao009_Lib/DRV_LVS/stdout.lvs.log - Text Viewer - Custom Compiler</span>
          <span className="ml-auto tracking-[0.3px]">Sat 14:54</span>
          <div className="ml-1 size-[7px] rounded-full bg-[#2e3436]" />
          <svg viewBox="0 0 68 16" className="mr-[13px] ml-[22px] h-4 w-[68px]" fill="#2e3436">
            <path d="M5 1h5v5H5zM0 10h5v5H0zM10 10h5v5h-5zM7 6h1.200v4H7zM2 8h11v1.200H2zM2 8h1.200v2H2zM12 8h1.200v2H12z" />
            <path d="M26 6h3l3.500-3.500v11L29 10h-3z" />
            <path d="M34 5.500q1.500 2.500 0 5M36 4q3 4 0 8M38 2.500q4.500 5.500 0 11" fill="none" stroke="#2e3436" strokeWidth="1.300" />
            <path d="M56.500 4a5.500 5.500 0 1 0 7 0M60 1v7" fill="none" stroke="#2e3436" strokeWidth="1.900" />
          </svg>
        </div>

        <div className="flex h-[932px] shrink-0 flex-col bg-[#5a4872] px-[4px] pr-[5px] pb-[5px]">
          <div className="flex h-[26px] shrink-0 items-center pl-px text-[#eceaf0]">
            <span className="tracking-[0.13px]">8 Bao009_Lib NAND2 starrc (Editing) - Layout Editor - Custom Compiler</span>
            <div className="ml-auto flex w-[64px]">
              <span className="origin-left scale-x-[0.68] font-['Liberation_Sans',sans-serif] text-[17px] font-bold text-white">SYNOPSYS</span>
            </div>
            <svg viewBox="0 0 48 12" className="mr-[3px] ml-[14px] h-3 w-12 overflow-visible" fill="none" stroke="#f3f1f6">
              <path d="M1 10.500h9" strokeWidth="1.300" />
              <path d="M22.500 2.500h6v5h-6zM19.500 5.500h5v4.500h-5z" />
              <path d="M38 2l8 8M46 2l-8 8" strokeWidth="1.500" />
            </svg>
          </div>
          <div className="flex h-[22px] shrink-0 text-[#16121c]">
            <div className="flex w-[27px] items-center justify-center bg-[#9e8eb5]"><Ico n="home" c="size-[15px]" /></div>
            {TABS.map(([ic, t, act], i) => (
              <div key={i} className={"flex w-[229.4px] items-center border-l border-[#66547f] pl-[4px] " + (act ? "bg-[#f6f4ef]" : "border-t border-t-[#8a79a4] bg-[#9e8eb5]")}>
                <Ico n={ic} c="size-[15px]" />
                <span className="flex-1 pt-px text-center">{t}</span>
                <Close active={act} />
              </div>
            ))}
            <div className="flex w-7 items-center justify-center border-l border-[#66547f] bg-[#9e8eb5]">
              <svg viewBox="0 0 12 12" className="size-3"><path d="M6 .5v11M.5 6h11" stroke="#111" strokeWidth="1.800" /></svg>
            </div>
          </div>

          <div className="flex h-[878px] flex-col bg-[#edeae3]">
            <div className="flex h-6 shrink-0 items-center border-b border-[#d3d0c9] pl-[6px]">
              {MENU.map(([m, w]) => (
                <span key={m} className={"shrink-0 tracking-[0.05px] " + w}>{m}</span>
              ))}
            </div>

            <div className="flex h-[31px] shrink-0 items-center border-b border-[#c6c3bc] bg-gradient-to-b from-[#f5f2ec] to-[#ebe8e0]">
              <Grip c="ml-[5px]" />
              <span className="ml-[6px] w-4">X:</span>
              <Field c="w-[84px] bg-white">-1.945</Field>
              <span className="w-[22px] pl-[6px]">Y:</span>
              <Field c="w-[84px] bg-white">-2.105</Field>
              <span className="w-[26px] pl-[3px]">DX:</span>
              <Field c="w-[87px] text-[#c2bfb9]">0.000</Field>
              <span className="w-[30px] pl-[6px]">DY:</span>
              <Field c="w-[87px] text-[#c2bfb9]">0.000</Field>
              <Ico n="top" c="ml-[6px] size-4" />
              <span className="ml-[11px] w-[39px]">Dist:</span>
              <span className="w-9 tracking-[0.1px]">0.000</span>
              <Sep />
              <Ico n="route" c="ml-[6px] size-4" />
              <Arrow c="ml-1" />
              <Grip c="ml-[10px]" />
              <span className="ml-[6px] w-[41px] tracking-[-0.1px]">Sel: 0</span>
              <Ico n="tablesel" />
              <Ico n="boxsel" c="ml-2 size-4" />
              <div className={BTN + "ml-[7px] w-[73px] justify-center"}>full</div>
              <Ico n="undosel" c="ml-[5px] size-4" />
              <Ico n="redosel" c="ml-2 size-4" />
              <Grip c="ml-[10px]" />
              <Ico n="bucket" c="ml-[10px] size-4" />
              <Arrow c="ml-[3px]" />
              <div className={BTN + "ml-[5px] w-[45px] justify-between pr-[5px] pl-1"}>
                <div className="h-[17px] w-[19px] border-x-2 border-black bg-black">
                  <div className="h-[17px] border-2 border-[#e2604f] bg-black" />
                </div>
                <Arrow />
              </div>
              <Ico n="selround" c="ml-[6px] size-4" />
              <Ico n="fit" c="ml-2 size-4" />
              <Ico n="probe" c="ml-2 size-4" />
              <Grip c="ml-[10px]" />
              <Ico n="icv" c="ml-[9px] size-4" />
              <Arrow c="ml-1" />
              <Sep c="ml-[6px]" />
              <Ico n="tools" c="ml-[6px] size-4" />
              <span className="ml-2 w-[73px] tracking-[0.15px]">Rule Recipe:</span>
              <div className={BTN + "w-[166px] justify-between pr-[6px] pl-1"}>default<Arrow /></div>
              <span className="ml-[9px] w-[39px] tracking-[-0.2px]">AREA:</span>
              <div className={BTN + "w-[77px] justify-between pr-[5px] pl-[3px] tracking-[0.1px]"}>Viewport<Arrow /></div>
              <Sep c="ml-[5px]" />
              <Ico n="gears" c="ml-[5px] size-4" />
              <Grip c="mr-[9px] ml-[10px]" />
              <div className="flex gap-2">
                <div className={CHIP + "border-[#1d355a] bg-[#3b639c]"}>DRC</div>
                <div className={CHIP + "border-[#3c7a1c] bg-[#59a82f]"}>LVS</div>
                <div className={CHIP + "border-[#8f4e16] bg-[#cf7a30]"}>RCX</div>
                <div className={CHIP + "border-[#3d1ca6] bg-[#6a35ee]"}>PLE</div>
              </div>
              <Grip c="ml-[11px]" />
              <svg viewBox="0 0 8 8" className="mr-1 ml-auto size-2"><path d="M.5.5L3.500 4l-3 3.500M4.500.5l3 3.500-3 3.500" fill="none" stroke="#222" strokeWidth="1.400" /></svg>
            </div>

            <div className="flex h-[32px] shrink-0 items-center border-b border-[#c6c3bc] bg-gradient-to-b from-[#f5f2ec] to-[#ebe8e0]">
              <Grip c="mr-2 ml-[5px]" />
              <div className="flex gap-2">
                <Ico n="newdoc" /><Ico n="folder" /><Ico n="folderstar" />
              </div>
              <Arrow c="mr-[6px] ml-1" />
              <div className="flex gap-2">
                <Ico n="save" /><Ico n="print" /><Ico n="camera" /><Ico n="library" /><Ico n="findtool" />
              </div>
              <Grip c="mr-[9px] ml-[11px]" />
              <div className="flex gap-2">
                {["zoom", "zoom2", "zoomin", "zoomout", "fit", "fitsel", "hand", "prev", "next", "bookmark"].map((n) => <Ico key={n} n={n} />)}
              </div>
              <Grip c="mr-2 ml-[10px]" />
              <div className="flex gap-2">
                {["treedown", "treedown2", "treeup", "treetop"].map((n) => <Ico key={n} n={n} />)}
              </div>
              <div className={BTN + "ml-[5px] w-[117px] gap-[2px] pl-1"}>
                <svg viewBox="0 0 12 14" className="h-[14px] w-3 shrink-0"><path d="M1 6h10L6 0zM1 8h10L6 14z" fill="#3f6fae" /><path d="M2.500 4.500h7M2.500 10h7" stroke="#a5c2e6" strokeWidth=".8" /></svg>
                <span className="tracking-[0.15px]">.../NAND2/starrc</span>
              </div>
              <Spin v="0" off c="ml-[3px]" />
              <Spin v="1" c="ml-[6px]" />
              <Grip c="ml-[9px]" />
              <Ico n="dots" c="ml-[9px] size-4" />
              <Grip c="ml-[11px]" />
            </div>

            <div className="flex h-[31px] shrink-0 items-center border-b border-[#a9a6a0] bg-gradient-to-b from-[#f5f2ec] to-[#ebe8e0]">
              <Grip c="ml-[5px]" />
              <span className="ml-[7px] w-[88px] tracking-[0.18px] text-[#77746f] italic">(No Command)</span>
              <Sep />
              <span className="ml-1">History:</span>
            </div>

            <div className="flex h-[728px] shrink-0">
              <div className="flex w-10 shrink-0 flex-col items-center border-r border-[#c9c6c0] bg-gradient-to-r from-[#f6f3ed] to-[#e9e6de]">
                <GripH c="mt-1" />
                <div className="mt-[9px] flex flex-col gap-[8.7px]">
                  {SIDE1.map((n) => <Ico key={n} n={n} />)}
                </div>
                <GripH c="mt-[12px]" />
                <div className="mt-[9px] flex flex-col gap-2">
                  <div className="flex items-center"><Ico n="undo" /><Arrow c="ml-1" fill="#8b8883" /></div>
                  <div className="flex items-center"><Ico n="redo" /><Arrow c="ml-1" fill="#8b8883" /></div>
                </div>
                <div className="mt-2 flex flex-col gap-[9px]">
                  {SIDE2.map((n) => <Ico key={n} n={n} />)}
                </div>
                <div className="mt-[5px] flex size-[22px] items-center justify-center rounded-[2px] border border-[#b5b2ad] bg-[#d9d6d0]"><Ico n="sliders" c="size-[14px]" /></div>
              </div>
              <Canvas />
              <PropertyPanel />
            </div>

            <div className="flex h-[32px] shrink-0 items-center justify-end border-b border-[#c9b9dc] pt-[2px] pr-[2px]">
              <svg viewBox="0 0 22 18" className="h-[18px] w-[22px]">
                <rect x="0" y="3" width="22" height="15" fill="#222" />
                <path d="M0 3h22v3H0z" fill="#8a8a8a" />
                <path d="M2 7l4 3.500L2 14M8 13.500h12" stroke="#fff" strokeWidth="1.800" fill="none" />
                <circle cx="17" cy="5" r="5" fill="#e9e21a" />
              </svg>
              <Arrow c="mr-1 ml-[5px]" />
              <div className={BTN + "mr-[3px] w-[30px] justify-center gap-[2px]"}>
                <svg viewBox="0 0 15 15" className="size-[15px]"><path d="M7.500 1v13M1 7.500h13M5.500 3l2-2 2 2M5.500 12l2 2 2-2M3 5.500l-2 2 2 2M12 5.500l2 2-2 2" fill="none" stroke="#4a6af2" strokeWidth="1.400" /></svg>
                <svg viewBox="0 0 8 5" className="h-1 w-[6px]"><path d="M0 0h8L4 5z" fill="#444" /></svg>
              </div>
              <div className={BTN + "w-[167px] pr-[6px] pl-[5px]"}>
                <svg viewBox="0 0 20 14" className="h-[14px] w-5"><rect x="1" y="1" width="18" height="12" fill="#000" stroke="#5f6c80" strokeWidth="2" /><path d="M3 10l5-6M7 11l6-8M12 11l5-7" stroke="#c5cbd6" strokeWidth="1" /></svg>
                <span className="ml-1 flex-1 tracking-[-0.05px]">NWELL drw</span>
                <Arrow />
              </div>
            </div>
          </div>
        </div>

        <div className="flex h-[34px] shrink-0 items-center bg-gradient-to-b from-[#ededed] to-[#dedede] pl-[5px] font-['Open_Sans',sans-serif] text-[12.2px] text-[#3f4446]">
          <div className="flex h-[25px] w-7 items-center justify-center rounded-[2px] border border-[#c3c3c3] bg-[#ebebeb]">
            <svg viewBox="0 0 14 13" className="h-[13px] w-[14px]" fill="none" stroke="#2e3436" strokeWidth="2"><path d="M7 1h6v6H7zM4 6H1v6h5v-2" /></svg>
          </div>
          <div className="ml-1 flex h-[28px] w-[241px] items-center rounded-[2px] border border-[#c3c3c3] bg-[#ededed] pl-[6px]">
            <svg viewBox="0 0 20 20" className="size-5"><rect x=".5" y=".5" width="19" height="19" rx="1" fill="#a5a5a3" stroke="#888" /><rect x="2" y="2" width="16" height="15" fill="#2c3633" /><path d="M4 4.500l2 1.500-2 1.500M7 8.500h3" stroke="#cfd8d4" fill="none" /></svg>
            <span className="ml-[5px] pt-[2px] tracking-[-0.32px]">sv10@capacitor:~/Synopsys</span>
          </div>
          <div className="ml-1 flex h-[28px] w-[242px] items-center rounded-[2px] border border-[#b5b5b5] bg-[#cacaca] pl-[6px]">
            <Ico n="device" c="size-[21px]" />
            <span className="ml-1 pt-[2px] tracking-[-0.12px]">8 Bao009_Lib NAND2 starrc (Editin...</span>
          </div>
          <div className="mr-[13px] ml-auto flex items-center gap-[3px]">
            <div className="h-[23px] w-[49px] border-2 border-[#888] bg-[#f4f3f2]" />
            <div className="h-6 w-[49px] border border-[#d0d0d0] bg-[#dcdcdc]" />
            <div className="h-6 w-[49px] border border-[#d0d0d0] bg-[#dcdcdc]" />
            <div className="h-6 w-[49px] rounded-r-[3px] border border-[#d0d0d0] bg-[#dcdcdc]" />
          </div>
        </div>
      </div>

      <footer className="flex h-[57px] shrink-0 items-center border-t border-[#3f464e] bg-gradient-to-r from-[#1e2026] via-[#162632] to-[#162736] pl-[584px] font-['Open_Sans',sans-serif] text-white">
        <svg viewBox="0 0 30 30" className="mt-1 size-[30px]">
          <defs><linearGradient id="win" x1="0" y1="0" x2="1" y2="1"><stop offset="0" stopColor="#7fdcff" /><stop offset="1" stopColor="#0a8ff0" /></linearGradient></defs>
          <path d="M1 0h13.500v14.300H0V1zM15.500 0H29l1 1v13.300H15.500zM0 15.500h14.500V30H1l-1-1zM15.500 15.500H30V29l-1 1H15.500z" fill="url(#win)" />
        </svg>
        <div className="mt-[2px] ml-[17px] flex h-10 w-[275px] items-center rounded-full border border-[#57606a] bg-[#3a424c] pl-[14px]">
          <svg viewBox="0 0 19 19" className="size-[19px]"><circle cx="8" cy="8" r="6.800" fill="none" stroke="#e8e8e8" strokeWidth="1.900" /><path d="M12.800 12.800l5 5" stroke="#e8e8e8" strokeWidth="2.200" strokeLinecap="round" /></svg>
          <span className="ml-3 pt-px text-[16px] text-[#d5d8db]">Search</span>
        </div>
        <div className="mt-1 ml-[15px] flex gap-[25px]">
          <svg viewBox="0 0 30 30" className="size-[30px]">
            <path d="M0 4q0-2 2-2h8l3 3h15q2 0 2 2v6H0z" fill="#e0a30c" /><rect y="6.500" width="30" height="22" rx="1.500" fill="#fdca3e" />
            <path d="M4.500 28.500v-6q0-2 2-2h17q2 0 2 2v6z" fill="#1478cf" /><path d="M9 24.500h12" stroke="#0c508f" strokeWidth="1.500" />
          </svg>
          <svg viewBox="0 0 30 30" className="size-[30px]">
            <path d="M1 8.500l2.500-2L22 22.500V30L4 23.500l-3-2z" fill="#a57be0" /><path d="M1 21.500L22 0v8L4 23.500z" fill="#6b42a8" />
            <path d="M22 0l8 4v22l-8 4z" fill="#c39af6" /><path d="M1 8.500v13l5-6z" fill="#7a4fb8" /><path d="M16 10L22 5v20l-10-8z" fill="#8e63cf" />
          </svg>
          <svg viewBox="0 0 30 30" className="size-[30px]">
            <circle cx="16" cy="6" r="4.800" fill="#7b83eb" /><circle cx="25" cy="7.500" r="3.300" fill="#5059c9" />
            <path d="M20 12h9q1 0 1 1v6q0 6-6 6t-5-3z" fill="#5059c9" /><path d="M9 12h13v9q0 7-7 7t-7-6z" fill="#7b83eb" />
            <rect y="8" width="15" height="14" rx="1.500" fill="#4b53bc" />
            <text x="7.500" y="19" textAnchor="middle" fontSize="11" fontWeight="bold" fontFamily="Open Sans, sans-serif" fill="#fff">T</text>
          </svg>
          <svg viewBox="0 0 30 30" className="size-[30px] overflow-visible">
            <rect x=".7" y="1" width="28.600" height="5" fill="#00f" stroke="#ddd" strokeWidth="1.300" />
            <text x="15" y="28.500" textAnchor="middle" fontSize="29" fontWeight="bold" textLength="25" lengthAdjust="spacingAndGlyphs" fontFamily="Liberation Sans, sans-serif" fill="#000" stroke="#e5e5e5" strokeWidth="1.100">M</text>
          </svg>
          <svg viewBox="0 0 30 30" className="size-[30px]">
            <rect width="30" height="30" fill="#e95420" />
            <circle cx="15" cy="15" r="7.800" fill="none" stroke="#fff" strokeWidth="3" strokeDasharray="12.300 4" strokeDashoffset="-2" />
            <circle cx="6.500" cy="15" r="3.600" fill="#e95420" /><circle cx="19.500" cy="7.500" r="3.600" fill="#e95420" /><circle cx="19.500" cy="22.500" r="3.600" fill="#e95420" />
            <circle cx="6.500" cy="15" r="2.600" fill="#fff" /><circle cx="19.500" cy="7.500" r="2.600" fill="#fff" /><circle cx="19.500" cy="22.500" r="2.600" fill="#fff" />
          </svg>
          <svg viewBox="0 0 30 30" className="size-[30px]">
            <circle cx="15" cy="15" r="15" fill="#f3c11c" />
            <path d="M15 15L2 7.500A15 15 0 0 1 28 7.500z" fill="#e33b2e" /><path d="M2 7.500A15 15 0 0 0 15 30l6-11-13-1z" fill="#2da24c" />
            <circle cx="15" cy="15" r="7" fill="#fff" /><circle cx="15" cy="15" r="5.500" fill="#3b7ded" />
            <circle cx="22.500" cy="7.500" r="7" fill="#9fdcdc" /><path d="M16 6q3-6 8-5 5 2 5 6z" fill="#f5f5f5" />
            <path d="M18 8.500h8M20 12h5" stroke="#436b78" strokeWidth="1.600" /><circle cx="26" cy="10" r="1.500" fill="#e0573c" />
          </svg>
          <svg viewBox="0 0 30 30" className="size-[30px]" fill="none" stroke="#e31c4b" strokeWidth="1.700">
            <circle cx="15" cy="15" r="14" /><ellipse cx="15" cy="15" rx="6.800" ry="12.500" /><path d="M18 3q7 3 7 12t-7 12" />
          </svg>
          <div className="relative">
            <VncLogo c="size-[30px]" />
            <div className="absolute top-[35px] left-[11px] h-[3px] w-2 rounded-full bg-[#9aa2aa]" />
          </div>
        </div>
        <svg viewBox="0 0 14 8" className="ml-[268px] h-2 w-[14px]"><path d="M1 7l6-6 6 6" fill="none" stroke="#fff" strokeWidth="1.700" /></svg>
        <span className="mt-[2px] ml-[26px] w-[52px] text-[14.5px] tracking-[-0.1px]">ENG</span>
        <svg viewBox="0 0 20 20" className="size-5" fill="none" stroke="#fff" strokeWidth="1.300">
          <path d="M10 18.500a8.700 8.700 0 1 1 8.500-9M9.500 18.500Q1.500 9.500 9.500 1 13 5 13.500 9M1.500 7h16M1.500 13H9" />
          <circle cx="15" cy="15" r="4.300" /><path d="M12 18l6-6" />
        </svg>
        <svg viewBox="0 0 20 16" className="ml-[10px] h-4 w-5" fill="none" stroke="#fff" strokeWidth="1.300"><path d="M1 5.500h3L8.500 1.500v13L4 10.500H1zM12.500 5l6 6M18.500 5l-6 6" /></svg>
        <svg viewBox="0 0 21 17" className="ml-[9px] h-[17px] w-[21px]">
          <rect x="3" y="5" width="15" height="11" rx="2" fill="none" stroke="#fff" strokeWidth="1.400" /><path d="M7 7h9v7H5v-3z" fill="#fff" /><path d="M19 8.500h1.800v4H19z" fill="#fff" />
          <path d="M5 0L0 7h3l-1.500 5L7.500 5H5z" fill="#fff" stroke="#162736" strokeWidth=".7" />
        </svg>
        <div className="ml-[11px] w-[78px] text-right text-[14.5px] leading-5">
          <div className="tracking-[-0.2px]">2:54 PM</div>
          <div className="tracking-[-0.05px]">5/10/2025</div>
        </div>
        <svg viewBox="0 0 18 20" className="ml-[10px] h-5 w-[18px]">
          <path d="M2 14.500l1.500-2V8q0-6 5.500-6t5.500 6v4.500l1.500 2v1H2zM6.500 17h5q-1 2.300-2.500 2.300T6.500 17z" fill="#fff" />
          <path d="M6 7h4l-4 5h4" fill="none" stroke="#162736" strokeWidth="1.300" />
          <path d="M12 1h4l-4 5h4" fill="none" stroke="#fff" strokeWidth="1.300" />
        </svg>
      </footer>
    </div>
  );
}
